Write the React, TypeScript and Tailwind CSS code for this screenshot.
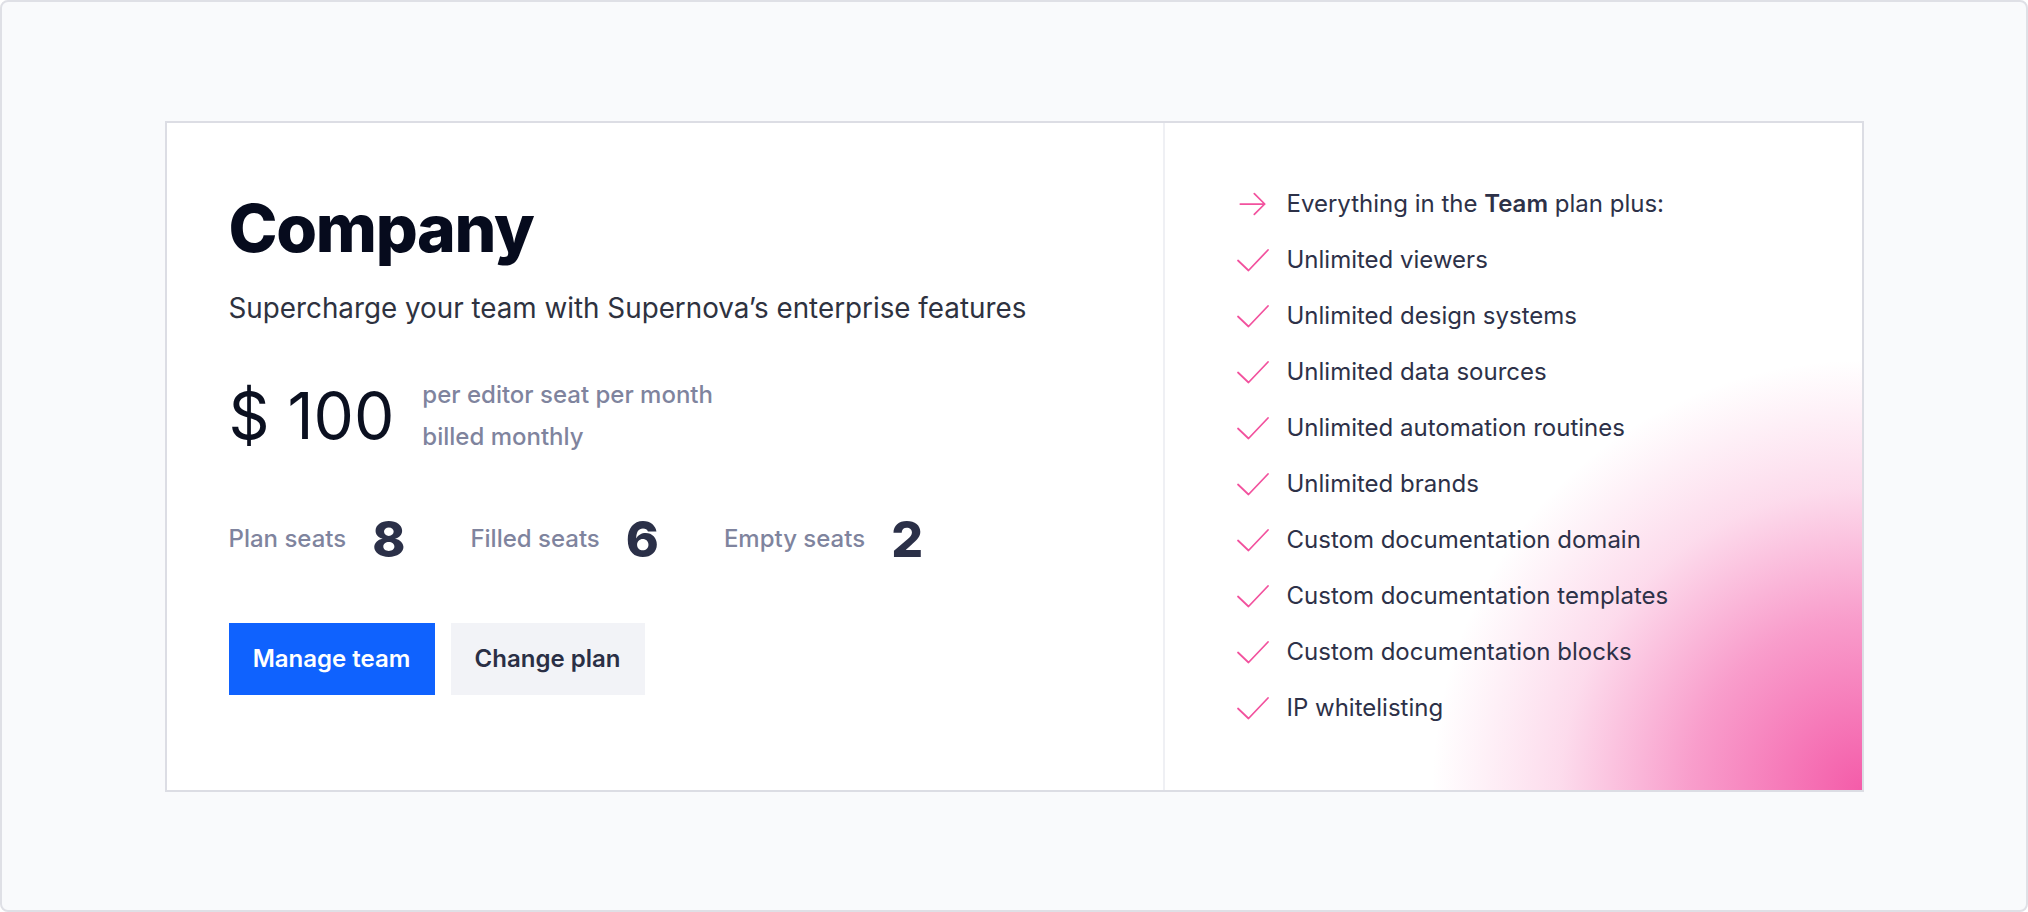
import React from "react";

const ArrowIcon = () => (
  <svg width="32" height="24" viewBox="0 0 32 24" fill="none" stroke="#f2529e" strokeWidth="1.75" strokeLinecap="round" strokeLinejoin="round">
    <path d="M3.3 12h24.4M17.3 1.7L27.7 12 17.3 22.4" />
  </svg>
);

const CheckIcon = () => (
  <svg width="32" height="24" viewBox="0 0 32 24" fill="none" stroke="#f2529e" strokeWidth="1.75" strokeLinecap="round" strokeLinejoin="round">
    <path d="M1 12.5l10.5 10L31 2" />
  </svg>
);

const features = [
  "Unlimited viewers",
  "Unlimited design systems",
  "Unlimited data sources",
  "Unlimited automation routines",
  "Unlimited brands",
  "Custom documentation domain",
  "Custom documentation templates",
  "Custom documentation blocks",
  "IP whitelisting",
];

const seats = [
  { label: "Plan seats", value: 8 },
  { label: "Filled seats", value: 6 },
  { label: "Empty seats", value: 2 },
];

const Row = ({ icon, children }: { icon: React.ReactNode; children: React.ReactNode }) => (
  <li className="flex items-center h-[56px]">
    <span className="w-[32px] flex items-center justify-center">{icon}</span>
    <span className="ml-[18px] text-[24px] leading-[56px] text-[#2d3148]">{children}</span>
  </li>
);

export default function App() {
  return (
    <div className="font-[Inter,sans-serif] h-[912px] w-full rounded-lg border-2 border-[#dfe0e6] bg-[#f9fafc] flex items-center justify-center">
      <div className="w-[1699px] h-[671px] flex border-2 border-[#dcdde4] bg-white">
        <div className="w-[998px] border-r-2 border-[#eff0f4] pl-[62px] pt-[72px]">
          <h1 className="text-[66px] leading-none font-extrabold tracking-[-0.02em] text-[#060b1d]">Company</h1>
          <p className="mt-[27px] text-[27.8px] leading-[40px] text-[#2e3240]">
            Supercharge your team with Supernova’s enterprise features
          </p>
          <div className="mt-[46px] flex items-center gap-7">
            <span className="text-[64px] leading-none text-[#0b1020]">$ 100</span>
            <div className="text-[24px] leading-[42px] font-medium text-[#7f849e]">
              <div>per editor seat per month</div>
              <div>billed monthly</div>
            </div>
          </div>
          <div className="mt-[56px] flex items-center gap-[65px]">
            {seats.map((s) => (
              <div key={s.label} className="flex items-center">
                <span className="text-[24px] font-medium text-[#7f849e]">{s.label}</span>
                <span className="ml-[26px] text-[50px] leading-none font-extrabold text-[#2b3048]">{s.value}</span>
              </div>
            ))}
          </div>
          <div className="mt-[59px] flex gap-4">
            <button className="w-[206px] h-[72px] bg-[#0f62fe] text-white text-[24px] font-semibold">Manage team</button>
            <button className="w-[194px] h-[72px] bg-[#f2f3f7] text-[#2a2f45] text-[24px] font-semibold">Change plan</button>
          </div>
        </div>
        <div className="flex-1 pl-[72px] pt-[53px] bg-[radial-gradient(circle_430px_at_100%_100%,#f45ca9_0%,rgba(244,92,169,0.6)_40%,rgba(244,92,169,0.22)_70%,rgba(244,92,169,0)_100%)]">
          <ul>
            <Row icon={<ArrowIcon />}>
              Everything in the <b className="font-semibold">Team</b> plan plus:
            </Row>
            {features.map((f) => (
              <Row key={f} icon={<CheckIcon />}>
                {f}
              </Row>
            ))}
          </ul>
        </div>
      </div>
    </div>
  );
}
